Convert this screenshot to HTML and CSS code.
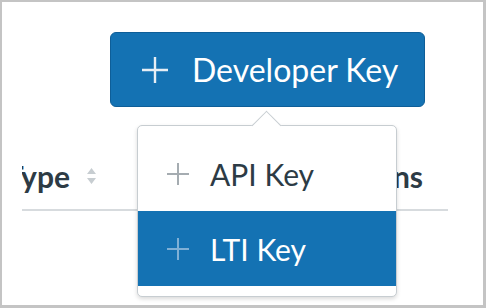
FILE: index.html
```html
<!DOCTYPE html>
<html lang="en">
<head>
  <meta charset="UTF-8">
  <title>Developer Keys</title>
  <link rel="stylesheet" href="styles.css">
</head>
<body>
  <div class="frame">
    <div class="toolbar">
      <button class="btn-primary" type="button">
        <svg class="icon-plus" viewBox="0 0 28 28" width="28" height="28"><path d="M14 1v26M1 14h26"/></svg>
        <span>Developer Key</span>
      </button>
    </div>

    <div class="table">
      <div class="table-head">
        <div class="th th-type">
          <span>Type</span>
          <svg class="sort" viewBox="0 0 11 18" width="11" height="18"><path d="M5.5 1l4.5 6H1zM5.5 17l4.5-6H1z"/></svg>
        </div>
        <div class="th-spacer"></div>
        <div class="th th-actions">Actions</div>
      </div>
    </div>

    <div class="popover">
      <div class="popover-arrow"></div>
      <ul class="menu">
        <li class="menu-item">
          <svg class="icon-plus" viewBox="0 0 24 24" width="24" height="24"><path d="M12 1v22M1 12h22"/></svg>
          <span>API Key</span>
        </li>
        <li class="menu-item active">
          <svg class="icon-plus" viewBox="0 0 24 24" width="24" height="24"><path d="M12 1v22M1 12h22"/></svg>
          <span>LTI Key</span>
        </li>
      </ul>
    </div>
  </div>
</body>
</html>
```

FILE: styles.css
```css
body {
  margin: 0;
  font-family: Lato, "Open Sans", sans-serif;
  color: #2d3b45;
}
.frame {
  position: relative;
  width: 486px;
  height: 308px;
  box-sizing: border-box;
  border: 2px solid #c4c4c4;
  border-right-width: 3px;
  border-bottom-width: 3px;
  background: #fff;
  overflow: hidden;
}
.toolbar {
  padding: 30px 0 0 108px;
}
.btn-primary {
  display: flex;
  align-items: center;
  gap: 23px;
  height: 75px;
  padding: 0 26px 0 30px;
  background: #1472b3;
  color: #fff;
  border: 1px solid #0e5e98;
  border-radius: 6px;
  font-family: inherit;
  font-size: 32px;
  cursor: pointer;
}
.btn-primary .icon-plus {
  stroke: #e6eef5;
  stroke-width: 2.4;
}
.icon-plus {
  fill: none;
  flex: none;
}
.table {
  margin: 36px 35px 0 20px;
  overflow: hidden;
}
.table-head {
  display: flex;
  align-items: center;
  height: 66px;
  border-bottom: 2px solid #d7dbde;
}
.th {
  font-size: 30px;
  font-weight: bold;
  white-space: nowrap;
}
.th-type {
  width: 78px;
  flex: none;
  display: flex;
  justify-content: flex-end;
  align-items: center;
  gap: 16px;
  padding-right: 3px;
  box-sizing: border-box;
  overflow: hidden;
}
.sort {
  fill: #c7cdd1;
  flex: none;
}
.th-spacer {
  flex: 1;
}
.th-actions {
  padding-right: 25px;
}
.popover {
  position: absolute;
  left: 135px;
  top: 123px;
  width: 258px;
  background: #fff;
  border: 1px solid #c7cdd1;
  border-radius: 5px;
  box-shadow: 0 2px 4px rgba(0, 0, 0, 0.15);
}
.popover-arrow {
  position: absolute;
  left: 118px;
  top: -11px;
  width: 20px;
  height: 20px;
  background: #fff;
  border-left: 1px solid #c7cdd1;
  border-top: 1px solid #c7cdd1;
  transform: rotate(45deg);
}
.menu {
  position: relative;
  list-style: none;
  margin: 0;
  padding: 10px 0 10px;
}
.menu-item {
  display: flex;
  align-items: center;
  gap: 20px;
  height: 75px;
  padding-left: 28px;
  font-size: 30px;
  color: #2d3b45;
}
.menu-item .icon-plus {
  stroke: #a5acb1;
  stroke-width: 2;
}
.menu-item.active {
  background: #1472b3;
  color: #fff;
}
.menu-item.active .icon-plus {
  stroke: #7fb0d6;
}
```
